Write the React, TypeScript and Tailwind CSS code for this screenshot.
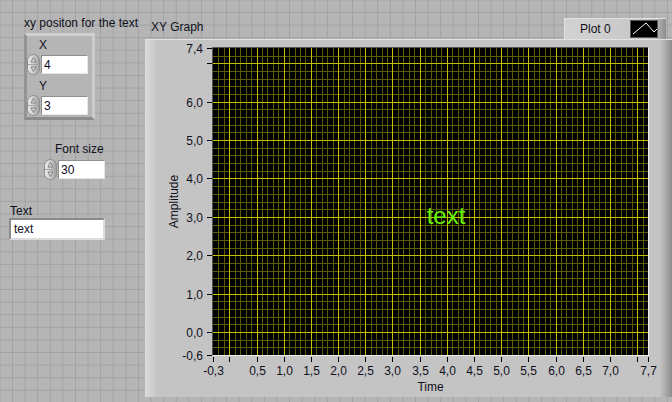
import React from "react";

const PX0 = 68;
const PY0 = 9;
const PW = 435;
const PH = 307;
const sx = (v: number) => PX0 + (v + 0.3) * (PW / 8);
const sy = (v: number) => PY0 + (7.4 - v) * (PH / 8);
const crisp = (n: number) => Math.round(n) + 0.5;

const Y_TICKS: Array<[number, string | null]> = [
  [7.4, "7,4"],
  [7, null],
  [6, "6,0"],
  [5, "5,0"],
  [4, "4,0"],
  [3, "3,0"],
  [2, "2,0"],
  [1, "1,0"],
  [0, "0,0"],
  [-0.6, "-0,6"],
];

const X_TICKS: Array<[number, string | null]> = [
  [-0.3, "-0,3"],
  [0, null],
  ...Array.from({ length: 14 }, (_, i): [number, string] => {
    const v = (i + 1) * 0.5;
    return [v, v.toFixed(1).replace(".", ",")];
  }),
  [7.5, null],
  [7.7, "7,7"],
];

function Spinner() {
  return (
    <svg width="13" height="21" viewBox="0 0 13 21" className="block shrink-0">
      <defs>
        <linearGradient id="spin" x1="0" x2="1" y1="0" y2="0">
          <stop offset="0" stopColor="#ececec" />
          <stop offset="0.5" stopColor="#cdcdcd" />
          <stop offset="1" stopColor="#9c9c9c" />
        </linearGradient>
      </defs>
      <rect x="0.5" y="0.5" width="12" height="20" rx="6" fill="url(#spin)" stroke="#8c8c8c" />
      <line x1="1" y1="10.5" x2="12" y2="10.5" stroke="#a4a4a4" />
      <path d="M6.5 3.5 L9 8 L4 8 Z" fill="#d8d8d8" stroke="#7a7a7a" strokeWidth="0.9" />
      <path d="M4 13 L9 13 L6.5 17.5 Z" fill="#d8d8d8" stroke="#7a7a7a" strokeWidth="0.9" />
    </svg>
  );
}

function Numeric({ value }: { value: string }) {
  return (
    <div className="flex items-center">
      <Spinner />
      <div className="ml-px flex h-[19px] w-[47px] items-center border border-[#8e8e8e] border-b-[#e6e6e6] border-r-[#e6e6e6] bg-white pl-[2px] leading-none text-[#0c0c24]">
        {value}
      </div>
    </div>
  );
}

function Graph() {
  const minorX: number[] = [];
  const majorX: number[] = [];
  for (let i = -2; i <= 76; i += 1) {
    (i % 5 === 0 ? majorX : minorX).push(crisp(sx(i / 10)));
  }
  const minorY: number[] = [];
  const majorY: number[] = [];
  for (let j = -2; j <= 36; j += 1) {
    (j % 5 === 0 ? majorY : minorY).push(crisp(sy(j / 5)));
  }
  const x1 = PX0;
  const x2 = PX0 + PW;
  const y1 = PY0;
  const y2 = PY0 + PH;

  return (
    <svg width="527" height="358" viewBox="0 0 527 358" className="block">
      <line x1="0" y1="0.5" x2="527" y2="0.5" stroke="#e2e2e2" />
      <rect x={x1} y={y1} width={PW} height={PH} fill="#000" />
      {minorX.map((x) => (
        <line key={`mx${x}`} x1={x} y1={y1} x2={x} y2={y2} stroke="#5e5c00" />
      ))}
      {minorY.map((y) => (
        <line key={`my${y}`} x1={x1} y1={y} x2={x2} y2={y} stroke="#5e5c00" />
      ))}
      {majorX.map((x) => (
        <line key={`Mx${x}`} x1={x} y1={y1} x2={x} y2={y2} stroke="#c2c000" />
      ))}
      {majorY.map((y) => (
        <line key={`My${y}`} x1={x1} y1={y} x2={x2} y2={y} stroke="#c2c000" />
      ))}
      {/* sunken frame */}
      <path d={`M${x1 - 0.5} ${y2} V${y1 - 0.5} H${x2}`} fill="none" stroke="#555" />
      <path d={`M${x1} ${y2 + 0.5} H${x2 + 0.5} V${y1}`} fill="none" stroke="#ececec" />

      <g fontFamily="'Liberation Sans', Arial, sans-serif" fontSize="12" fill="#10101c">
        {Y_TICKS.map(([v, label]) => {
          const y = crisp(sy(v));
          return (
            <g key={`yt${v}`}>
              <line x1="62" y1={y} x2="67" y2={y} stroke="#000" />
              {label ? (
                <text x="58" y={y + 4} textAnchor="end">
                  {label}
                </text>
              ) : null}
            </g>
          );
        })}
        {X_TICKS.map(([v, label]) => {
          const x = crisp(sx(v));
          return (
            <g key={`xt${v}`}>
              <line x1={x} y1="318" x2={x} y2="323" stroke="#000" />
              {label ? (
                <text x={x} y="335.5" textAnchor="middle">
                  {label}
                </text>
              ) : null}
            </g>
          );
        })}
        <text x="33" y="162.5" textAnchor="middle" transform="rotate(-90 33 162.5)">
          Amplitude
        </text>
        <text x={PX0 + PW / 2} y="352" textAnchor="middle">
          Time
        </text>
      </g>
      <text
        x="301"
        y="185"
        textAnchor="middle"
        fontFamily="'Liberation Sans', Arial, sans-serif"
        fontSize="24"
        fill="#66f400"
      >
        text
      </text>
    </svg>
  );
}

export default function App() {
  return (
    <div className="flex h-[402px] w-[672px] overflow-hidden bg-[#b5b5b5] bg-[linear-gradient(to_right,#a2a2a2_1px,transparent_1px),linear-gradient(to_bottom,#a2a2a2_1px,transparent_1px)] bg-[size:12.6px_12.6px] bg-[position:12px_12px] font-['Liberation_Sans',Arial,sans-serif] text-[12px] text-[#10101c]">
      {/* left controls */}
      <div className="flex w-[145px] shrink-0 flex-col">
        <div className="ml-[24px] mt-[16px] leading-[14px]">xy positon for the text</div>
        <div className="ml-[24px] mt-[3px] flex h-[87px] w-[71px] flex-col border-[3px] border-b-[#8c8c8c] border-l-[#939393] border-r-[#cdcdcd] border-t-[#d0d0d0] bg-[#b5b5b5]">
          <div className="ml-[12px] mt-[2px] h-[14px] leading-[14px]">X</div>
          <div className="mt-[2px]">
            <Numeric value="4" />
          </div>
          <div className="ml-[12px] mt-[4px] h-[14px] leading-[14px]">Y</div>
          <div className="mt-[2px]">
            <Numeric value="3" />
          </div>
        </div>
        <div className="ml-[55px] mt-[22px] h-[14px] leading-[14px]">Font size</div>
        <div className="ml-[44px] mt-[3px]">
          <Numeric value="30" />
        </div>
        <div className="ml-[10px] mt-[24px] h-[14px] leading-[14px]">Text</div>
        <div className="ml-[9px] flex h-[22px] w-[96px] items-center border-2 border-b-[#dcdcdc] border-l-[#8a8a8a] border-r-[#dcdcdc] border-t-[#8a8a8a] bg-white pl-[3px] leading-none">
          text
        </div>
      </div>

      {/* XY graph */}
      <div className="flex w-[527px] shrink-0 flex-col">
        <div className="flex h-[39px]">
          <div className="ml-[6px] mt-[20px] h-[14px] leading-[14px]">XY Graph</div>
          <div className="ml-auto mr-[6px] mt-[18px] flex h-[21px] w-[102px] items-center border-l border-t border-[#e0e0e0] bg-[linear-gradient(to_right,#d2d2d2,#c6c6c6_80%,#b8b8b8_90%,#8e8e8e)] pl-[15px]">
            <span className="leading-none">Plot 0</span>
            <div className="ml-auto mr-[8px] h-[18px] w-[28px] border border-[#5a5a5a] bg-black">
              <svg width="26" height="16" viewBox="0 0 26 16" className="block">
                <polyline points="2,13 15,2 23,11 26,8" fill="none" stroke="#fff" strokeWidth="1" />
              </svg>
            </div>
          </div>
        </div>
        <div className="h-[358px] bg-[linear-gradient(to_right,#dcdcdc,#c4c4c4_12px,#c4c4c4_calc(100%-12px),#8c8c8c)]">
          <Graph />
        </div>
      </div>
    </div>
  );
}
